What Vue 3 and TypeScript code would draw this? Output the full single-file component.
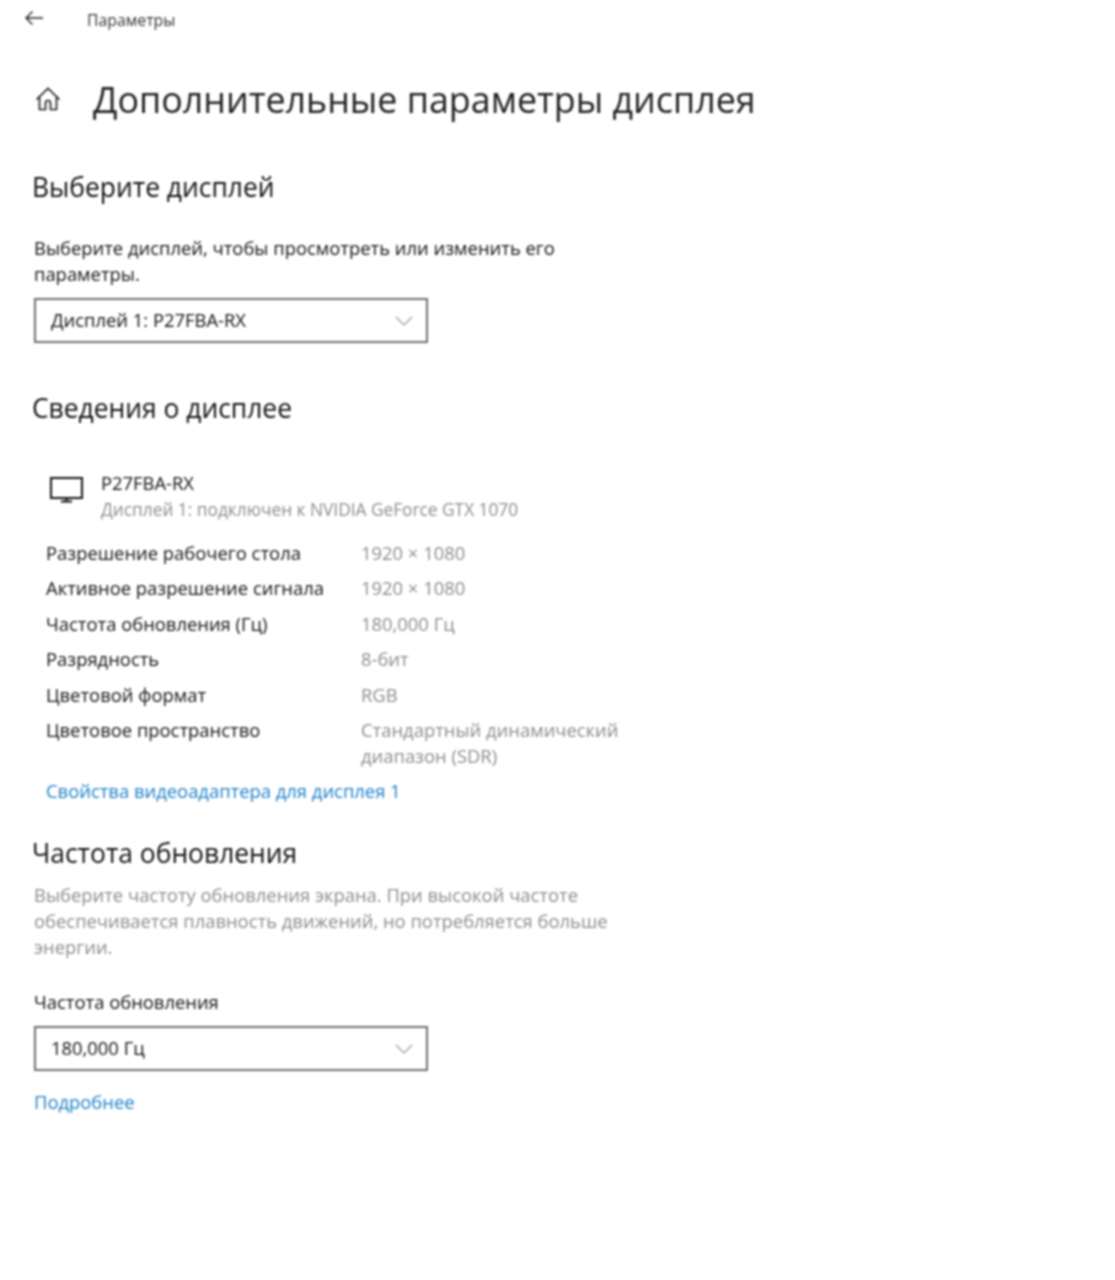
<script setup lang="ts">
interface InfoRow {
  label: string
  value: string[]
}

const rows: InfoRow[] = [
  { label: 'Разрешение рабочего стола', value: ['1920 × 1080'] },
  { label: 'Активное разрешение сигнала', value: ['1920 × 1080'] },
  { label: 'Частота обновления (Гц)', value: ['180,000 Гц'] },
  { label: 'Разрядность', value: ['8-бит'] },
  { label: 'Цветовой формат', value: ['RGB'] },
  { label: 'Цветовое пространство', value: ['Стандартный динамический', 'диапазон (SDR)'] },
]
</script>

<template>
  <div class="page">
    <header class="topbar">
      <svg class="back" width="20" height="16" viewBox="0 0 20 16" fill="none" stroke="#222" stroke-width="1.4">
        <path d="M2 8H19M8.500 1.500L2 8l6.500 6.500" />
      </svg>
      <span class="app-name">Параметры</span>
    </header>

    <div class="title-row">
      <svg class="home" width="28" height="28" viewBox="0 0 28 28" fill="none" stroke="#222" stroke-width="1.700">
        <path d="M2.500 14.500L14 3.500l11.500 11M5.500 12v12.500h6v-6.500a2.500 2.500 0 0 1 5 0v6.500h6V12" />
      </svg>
      <h1>Дополнительные параметры дисплея</h1>
    </div>

    <h2 class="first">Выберите дисплей</h2>
    <p class="text intro">Выберите дисплей, чтобы просмотреть или изменить его параметры.</p>
    <div class="select">
      <span>Дисплей 1: P27FBA-RX</span>
      <svg width="18" height="10" viewBox="0 0 18 10" fill="none" stroke="#999" stroke-width="1.200">
        <path d="M1 1l8 8 8-8" />
      </svg>
    </div>

    <h2 class="info-title">Сведения о дисплее</h2>
    <div class="monitor">
      <svg width="36" height="28" viewBox="0 0 36 28" fill="none" stroke="#111" stroke-width="2">
        <path d="M2 2h31v20H2zM17.500 22v3M12 25.500h11" />
      </svg>
      <div>
        <div class="text">P27FBA-RX</div>
        <div class="text muted sub">Дисплей 1: подключен к NVIDIA GeForce GTX 1070</div>
      </div>
    </div>

    <dl class="rows">
      <div v-for="row in rows" :key="row.label" class="row">
        <dt class="text">{{ row.label }}</dt>
        <dd class="text muted">
          <div v-for="line in row.value" :key="line">{{ line }}</div>
        </dd>
      </div>
    </dl>
    <a class="text link adapter">Свойства видеоадаптера для дисплея 1</a>

    <h2 class="rate-title">Частота обновления</h2>
    <p class="text muted desc">Выберите частоту обновления экрана. При высокой частоте обеспечивается плавность движений, но потребляется больше энергии.</p>
    <div class="text rate-label">Частота обновления</div>
    <div class="select">
      <span>180,000 Гц</span>
      <svg width="18" height="10" viewBox="0 0 18 10" fill="none" stroke="#999" stroke-width="1.200">
        <path d="M1 1l8 8 8-8" />
      </svg>
    </div>
    <a class="text link more">Подробнее</a>
  </div>
</template>

<style scoped>
.page {
  height: 1280px;
  box-sizing: border-box;
  padding: 0 0 0 34px;
  background: #fff;
  color: #111;
  font-family: "Open Sans", "Noto Sans", sans-serif;
  filter: blur(0.9px);
  overflow: hidden;
}

.topbar {
  display: flex;
  align-items: center;
  height: 40px;
  margin-left: -10px;
}

.back {
  margin-right: 43px;
  margin-top: -4px;
}

.app-name {
  font-size: 15.800px;
  color: #333;
}

.title-row {
  display: flex;
  align-items: center;
  gap: 31px;
  margin-top: 35px;
  height: 48px;
}

.home {
  flex: none;
}

h1 {
  margin: 0;
  font-size: 35.800px;
  font-weight: 400;
  color: #222;
  white-space: nowrap;
}

h2 {
  margin: 0 0 0 -2px;
  font-size: 26.400px;
  line-height: 32px;
  font-weight: 400;
  color: #111;
}

.first {
  margin-top: 48px;
}

.text {
  font-size: 18.400px;
  line-height: 26px;
}

p {
  margin: 0;
  width: 590px;
}

.intro {
  margin-top: 32px;
}

.select {
  display: flex;
  align-items: center;
  justify-content: space-between;
  box-sizing: border-box;
  width: 394px;
  height: 45px;
  margin-top: 11px;
  padding: 0 13px 0 15px;
  border: 2px solid #6e6e6e;
  font-size: 18.400px;
}

.select span {
  margin-top: -2px;
}

.info-title {
  margin-top: 49px;
}

.monitor {
  display: flex;
  gap: 16px;
  margin: 46px 0 0 15px;
  align-items: flex-start;
}

.monitor svg {
  margin-top: 6px;
}

.sub {
  margin-top: 1px;
  font-size: 17.300px;
}

.muted {
  color: #8c8c8c;
}

.rows {
  margin: 17px 0 0 12px;
}

.row {
  display: grid;
  grid-template-columns: 315px 290px;
  margin-bottom: 9.400px;
}

dd {
  margin: 0;
}

.link {
  display: block;
  color: #1a7fc8;
}

.adapter {
  margin: 0 0 0 12px;
}

.rate-title {
  margin-top: 33px;
}

.desc {
  margin-top: 13px;
}

.rate-label {
  margin-top: 29px;
}

.more {
  margin-top: 18px;
}
</style>
